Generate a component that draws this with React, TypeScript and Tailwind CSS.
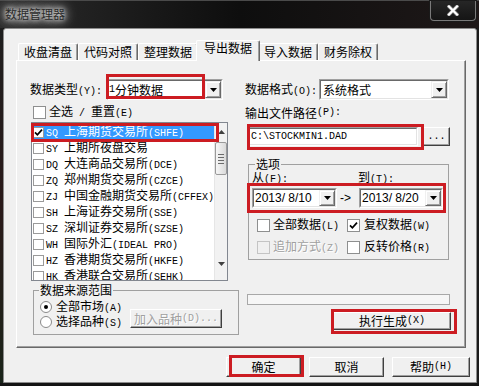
import React from "react";

function T({ s }: { s: string }) {
  const parts = s.split(/([\x20-\x7e]+)/).filter((p) => p.length > 0);
  return (
    <>
      {parts.map((p, i) =>
        /^[\x20-\x7e]+$/.test(p) ? (
          <span key={i} className="whitespace-pre text-[10px] [font-family:'Liberation_Mono',monospace]">
            {p}
          </span>
        ) : (
          <span key={i}>{p}</span>
        )
      )}
    </>
  );
}

function Sunken({ className = "", children }: { className?: string; children?: React.ReactNode }) {
  return (
    <div className={`border border-t-[#a0a0a0] border-l-[#a0a0a0] border-r-white border-b-white ${className}`}>
      <div className="flex h-full w-full border border-t-[#696969] border-l-[#696969] border-r-[#e3e3e3] border-b-[#e3e3e3] bg-white">
        {children}
      </div>
    </div>
  );
}

function DropBtn() {
  return (
    <div className="flex w-[16px] shrink-0 items-center justify-center border border-t-[#f0f0f0] border-l-[#f0f0f0] border-r-[#696969] border-b-[#696969] bg-[#f0f0f0] shadow-[inset_1px_1px_0_#fff,inset_-1px_-1px_0_#a0a0a0]">
      <svg width="7" height="4" viewBox="0 0 7 4">
        <path d="M0 0H7L3.5 4Z" fill="#000" />
      </svg>
    </div>
  );
}

function Btn({ className = "", children }: { className?: string; children?: React.ReactNode }) {
  return (
    <div
      className={`flex items-center justify-center whitespace-nowrap border border-t-white border-l-white border-r-[#404040] border-b-[#404040] bg-[#f0f0f0] shadow-[inset_-1px_-1px_0_#a0a0a0] ${className}`}
    >
      {children}
    </div>
  );
}

function Check({ checked = false, disabled = false }: { checked?: boolean; disabled?: boolean }) {
  return (
    <span
      className={
        disabled
          ? "flex h-[13px] w-[13px] shrink-0 items-center justify-center border border-[#c4c4c4] bg-[#f0f0f0]"
          : "flex h-[13px] w-[13px] shrink-0 items-center justify-center border border-[#8e8f8f] bg-white"
      }
    >
      {checked && (
        <svg width="9" height="9" viewBox="0 0 9 9">
          <path d="M1 4.3L3.4 6.8L8 1.6" stroke="#000" strokeWidth="1.7" fill="none" />
        </svg>
      )}
    </span>
  );
}

function SmallCheck({ checked = false }: { checked?: boolean }) {
  return (
    <span className="flex h-[11px] w-[11px] shrink-0 items-center justify-center border border-[#9a9a9a] bg-white">
      {checked && (
        <svg width="9" height="9" viewBox="0 0 9 9">
          <path d="M1 4.3L3.4 6.8L8 1.6" stroke="#000" strokeWidth="1.7" fill="none" />
        </svg>
      )}
    </span>
  );
}

function Radio({ checked = false }: { checked?: boolean }) {
  return (
    <span className="flex h-[12px] w-[12px] shrink-0 items-center justify-center rounded-full border border-[#8a8a8a] bg-white">
      {checked && <span className="h-[4px] w-[4px] rounded-full bg-black" />}
    </span>
  );
}

function DateBox({ text, className }: { text: string; className: string }) {
  return (
    <Sunken className={className}>
      <div className="flex flex-1 items-center pl-[1px] text-[12px] [font-family:'Liberation_Sans',sans-serif]">{text}</div>
      <DropBtn />
    </Sunken>
  );
}

const tabs = ["收盘清盘", "代码对照", "整理数据", "导出数据", "导入数据", "财务除权"];

const items = [
  "SQ 上海期货交易所(SHFE)",
  "SY 上期所夜盘交易",
  "DQ 大连商品交易所(DCE)",
  "ZQ 郑州期货交易所(CZCE)",
  "ZJ 中国金融期货交易所(CFFEX)",
  "SH 上海证券交易所(SSE)",
  "SZ 深圳证券交易所(SZSE)",
  "WH 国际外汇(IDEAL PRO)",
  "HZ 香港期货交易所(HKFE)",
  "HK 香港联合交易所(SEHK)",
];

export default function App() {
  return (
    <div className="relative flex h-[386px] w-[479px] flex-col overflow-hidden bg-[#141414] text-[12px] leading-[14px] text-black [font-family:'Noto_Sans_CJK_SC','Noto_Sans',sans-serif]">
      {/* title bar */}
      <div className="flex h-[28px] shrink-0 border-t border-[#4a4a4a] bg-gradient-to-r from-[#2c2c2c] via-[#0e0e0e] to-[#1e1818]">
        <div className="pl-[5px] pt-[6px] text-[12px] leading-[14px] text-[#2a2a2a] [text-shadow:0_0_4px_#e8e8e8,0_0_8px_#d8d8d8,0_0_12px_#b8b8b8,0_0_16px_#909090]">
          数据管理器
        </div>
        <div className="ml-auto mr-[3px] flex h-[20px] w-[46px] items-center justify-center rounded-b-[4px] border border-t-0 border-[#7a7a7a] bg-gradient-to-b from-[#262626] to-[#151515] shadow-[0_0_0_1px_#1a1a1a]">
          <svg width="12" height="11" viewBox="0 0 12 11">
            <path d="M2 1.5L10 9.5M10 1.5L2 9.5" stroke="#5a5a5a" strokeWidth="4" strokeLinecap="square" />
            <path d="M2 1.5L10 9.5M10 1.5L2 9.5" stroke="#fff" strokeWidth="2.4" strokeLinecap="square" />
          </svg>
        </div>
      </div>

      {/* body */}
      <div className="flex h-[355px] shrink-0">
        <div className="w-[3px] bg-gradient-to-b from-[#1e1e1e] via-[#2a1a1a] to-[#1a241a]" />
        <div className="flex w-[474px] flex-col rounded-t-[3px] border border-[#8c8c8c] bg-[#f0f0f0] pl-[12px] pt-[11px]">
          {/* tabs */}
          <div className="flex h-[20px] items-end pl-[2px]">
            {tabs.map((t, i) =>
              i === 3 ? (
                <div
                  key={t}
                  className="relative z-10 -mx-[2px] -mb-px flex h-[21px] w-[64px] justify-center rounded-t-[2px] border border-b-0 border-t-white border-l-white border-r-[#696969] bg-[#f0f0f0] shadow-[inset_-1px_0_0_#a0a0a0]"
                >
                  {t}
                </div>
              ) : (
                <div
                  key={t}
                  className="flex h-[17px] w-[60px] justify-center rounded-t-[2px] border border-b-0 border-t-white border-l-white border-r-[#696969] bg-[#f0f0f0] pt-[1px] shadow-[inset_-1px_0_0_#a0a0a0]"
                >
                  {t}
                </div>
              )
            )}
          </div>

          {/* panel */}
          <div className="flex h-[288px] w-[450px] border border-t-white border-l-white border-r-[#696969] border-b-[#696969] bg-[#f0f0f0] pl-[13px] pt-[18px] shadow-[inset_-1px_-1px_0_#a0a0a0]">
            {/* left column */}
            <div className="flex w-[209px] flex-col">
              <div className="flex h-[21px] items-center">
                <div className="w-[77px] whitespace-nowrap pt-[2px]">
                  <T s="数据类型(Y):" />
                </div>
                <Sunken className="h-[21px] w-[116px]">
                  <div className="flex flex-1 items-center whitespace-nowrap">
                    <T s="1分钟数据" />
                  </div>
                  <DropBtn />
                </Sunken>
              </div>
              <div className="mt-[5px] flex h-[14px] items-center gap-[3px] pl-[3px] whitespace-nowrap">
                <Check />
                <span>
                  <T s="全选 / 重置(E)" />
                </span>
              </div>
              <div className="ml-[1px] mt-[3px] flex h-[159px] w-[197px] border border-[#828790] bg-white">
                <div className="flex-1 overflow-hidden pt-[1px]">
                  {items.map((it, i) => (
                    <div
                      key={it}
                      className={
                        i === 0
                          ? "flex h-[16px] items-center gap-[2px] whitespace-nowrap bg-[#3399ff] pl-[1px] text-white"
                          : "flex h-[16px] items-center gap-[2px] whitespace-nowrap pl-[1px]"
                      }
                    >
                      <SmallCheck checked={i === 0} />
                      <span>
                        <T s={it} />
                      </span>
                    </div>
                  ))}
                </div>
                <div className="flex w-[13px] shrink-0 flex-col items-center border-l border-[#e6e6e6] bg-[#f2f2f2]">
                  <div className="flex h-[17px] items-center justify-center">
                    <svg width="7" height="4" viewBox="0 0 7 4">
                      <path d="M0 4H7L3.5 0Z" fill="#404040" />
                    </svg>
                  </div>
                  <div className="mt-[2px] flex h-[33px] w-[12px] flex-col items-center justify-center gap-[2px] rounded-[2px] border border-[#9a9a9a] bg-gradient-to-r from-[#f6f6f6] to-[#dadada]">
                    <span className="h-px w-[6px] bg-[#6a6a6a]" />
                    <span className="h-px w-[6px] bg-[#6a6a6a]" />
                    <span className="h-px w-[6px] bg-[#6a6a6a]" />
                    <span className="h-px w-[6px] bg-[#6a6a6a]" />
                  </div>
                  <div className="flex-1" />
                  <div className="mb-[8px] flex h-[17px] items-center justify-center">
                    <svg width="7" height="4" viewBox="0 0 7 4">
                      <path d="M0 0H7L3.5 4Z" fill="#404040" />
                    </svg>
                  </div>
                </div>
              </div>
              <fieldset className="ml-[3px] mt-[2px] w-[206px] border border-[#a0a0a0] pb-[5px]">
                <legend className="ml-[5px] px-[1px] leading-[14px]">数据来源范围</legend>
                <div className="flex pl-[6px] pt-[3px]">
                  <div className="flex w-[90px] flex-col gap-[1px]">
                    <div className="flex h-[14px] items-center gap-[4px] whitespace-nowrap">
                      <Radio checked />
                      <span>
                        <T s="全部市场(A)" />
                      </span>
                    </div>
                    <div className="flex h-[14px] items-center gap-[4px] whitespace-nowrap">
                      <Radio />
                      <span>
                        <T s="选择品种(S)" />
                      </span>
                    </div>
                  </div>
                  <div className="mb-[1px] self-end">
                    <Btn className="h-[19px] w-[92px] text-[#a0a0a0] [text-shadow:1px_1px_0_#fff]">
                      <T s="加入品种(D)..." />
                    </Btn>
                  </div>
                </div>
              </fieldset>
            </div>

            {/* right column */}
            <div className="ml-[6px] flex w-[205px] flex-col">
              <div className="flex h-[21px] items-center">
                <div className="w-[74px] whitespace-nowrap pt-[2px]">
                  <T s="数据格式(O):" />
                </div>
                <Sunken className="h-[21px] w-[130px]">
                  <div className="flex flex-1 items-center pl-[2px] whitespace-nowrap">系统格式</div>
                  <DropBtn />
                </Sunken>
              </div>
              <div className="mt-[6px] flex h-[14px] items-center whitespace-nowrap">
                <T s="输出文件路径(P):" />
              </div>
              <div className="ml-[3px] mt-[7px] flex h-[19px]">
                <Sunken className="h-[19px] w-[170px]">
                  <div className="flex items-center pl-[1px]">
                    <T s={"C:\\STOCKMIN1.DAD"} />
                  </div>
                </Sunken>
                <Btn className="ml-[5px] h-[19px] w-[27px]">
                  <T s="..." />
                </Btn>
              </div>
              <fieldset className="ml-[3px] mt-[11px] w-[201px] border border-[#a0a0a0] pb-[5px]">
                <legend className="ml-[6px] px-[1px] leading-[14px]">选项</legend>
                <div className="flex h-[14px] items-center pl-[3px] whitespace-nowrap">
                  <div className="w-[106px]">
                    <T s="从(F):" />
                  </div>
                  <div>
                    <T s="到(T):" />
                  </div>
                </div>
                <div className="mt-[3px] flex h-[20px] items-center pl-[3px]">
                  <DateBox text="2013/ 8/10" className="h-[20px] w-[85px]" />
                  <div className="w-[22px] pl-[3px] text-[12px] [font-family:'Liberation_Sans',sans-serif]">-&gt;</div>
                  <DateBox text="2013/ 8/20" className="h-[20px] w-[84px]" />
                </div>
                <div className="mt-[10px] flex h-[14px] items-center pl-[8px] whitespace-nowrap">
                  <div className="flex w-[90px] items-center gap-[3px]">
                    <Check />
                    <span>
                      <T s="全部数据(L)" />
                    </span>
                  </div>
                  <div className="flex items-center gap-[4px]">
                    <Check checked />
                    <span>
                      <T s="复权数据(W)" />
                    </span>
                  </div>
                </div>
                <div className="mt-[8px] flex h-[14px] items-center pl-[8px] whitespace-nowrap">
                  <div className="flex w-[90px] items-center gap-[3px] text-[#a0a0a0] [text-shadow:1px_1px_0_#fff]">
                    <Check disabled />
                    <span>
                      <T s="追加方式(Z)" />
                    </span>
                  </div>
                  <div className="flex items-center gap-[4px]">
                    <Check />
                    <span>
                      <T s="反转价格(R)" />
                    </span>
                  </div>
                </div>
              </fieldset>
              <div className="ml-[2px] mt-[34px] h-[11px] w-[203px] border border-[#a8a8a8] bg-[#f6f6f6]" />
              <Btn className="ml-[88px] mt-[7px] h-[18px] w-[118px]">
                <T s="执行生成(X)" />
              </Btn>
            </div>
          </div>

          {/* bottom buttons */}
          <div className="mt-[9px] flex gap-[8px] pl-[210px]">
            <Btn className="h-[20px] w-[75px]">确定</Btn>
            <Btn className="h-[20px] w-[75px]">取消</Btn>
            <Btn className="h-[20px] w-[78px]">
              <T s="帮助(H)" />
            </Btn>
          </div>
        </div>
        <div className="w-[2px] bg-[#1a1a1a]" />
      </div>
      <div className="h-[3px] shrink-0 bg-[#141414]" />

      {/* red annotation boxes */}
      <div className="absolute left-[106px] top-[74px] h-[25px] w-[99px] border-[3px] border-[#cc1c22]" />
      <div className="absolute left-[31px] top-[123px] h-[19px] w-[188px] border-[3px] border-[#cc1c22]" />
      <div className="absolute left-[247px] top-[124px] h-[26px] w-[177px] border-[3px] border-[#cc1c22]" />
      <div className="absolute left-[247px] top-[183px] h-[30px] w-[199px] border-[3px] border-[#cc1c22]" />
      <div className="absolute left-[331px] top-[309px] h-[25px] w-[126px] border-[3px] border-[#cc1c22]" />
      <div className="absolute left-[229px] top-[355px] h-[22px] w-[75px] border-[3px] border-[#cc1c22]" />
    </div>
  );
}
